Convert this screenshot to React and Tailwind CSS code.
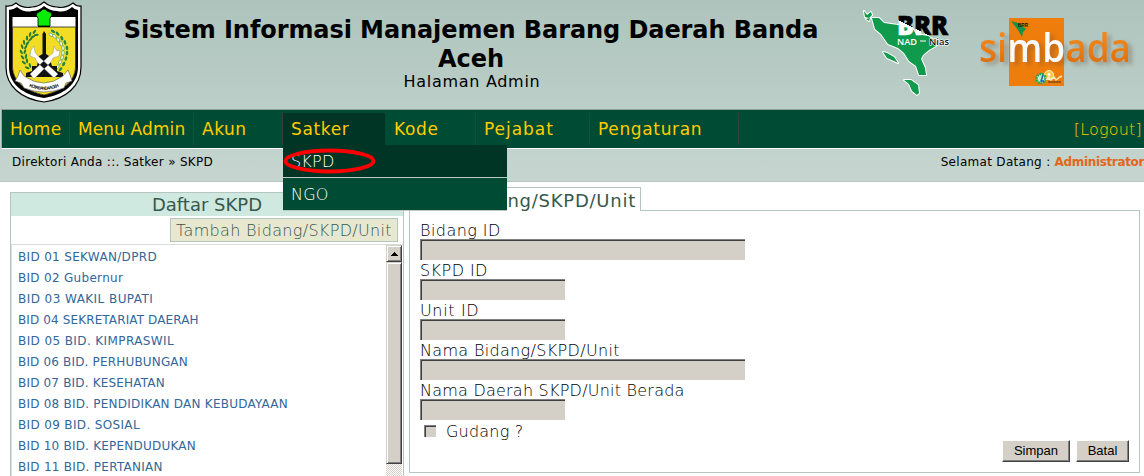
import React from "react";

const directory = [
  ["BID 01 SEKWAN/DPRD", "tracking-[0.33px]"],
  ["BID 02 Gubernur", "tracking-[0.3px]"],
  ["BID 03 WAKIL BUPATI", "tracking-[0.44px]"],
  ["BID 04 SEKRETARIAT DAERAH", "tracking-[0.12px]"],
  ["BID 05 BID. KIMPRASWIL", "tracking-[0.4px]"],
  ["BID 06 BID. PERHUBUNGAN", "tracking-[0.17px]"],
  ["BID 07 BID. KESEHATAN", "tracking-[0.18px]"],
  ["BID 08 BID. PENDIDIKAN DAN KEBUDAYAAN", "tracking-[0.23px]"],
  ["BID 09 BID. SOSIAL", "tracking-[0.35px]"],
  ["BID 10 BID. KEPENDUDUKAN", "tracking-[0.22px]"],
  ["BID 11 BID. PERTANIAN", "tracking-[0.27px]"],
];

const fields = [
  ["Bidang ID", "w-[325px]", "tracking-[0.45px]"],
  ["SKPD ID", "w-[145px]", "tracking-[0.45px]"],
  ["Unit ID", "w-[145px]", "tracking-[0.65px]"],
  ["Nama Bidang/SKPD/Unit", "w-[325px]", "tracking-[0.33px]"],
  ["Nama Daerah SKPD/Unit Berada", "w-[145px]", "tracking-[0.23px]"],
];

const menu = [
  ["Home", "w-[68px]", "tracking-[0.3px]"],
  ["Menu Admin", "w-[124px]", "tracking-[0.1px]"],
  ["Akun", "w-[89px]", "tracking-[0.5px]"],
  ["Satker", "w-[102px]", "tracking-[0.65px]"],
  ["Kode", "w-[91px] pl-px", "tracking-[0.7px]"],
  ["Pejabat", "w-[114px]", "tracking-[0.95px]"],
  ["Pengaturan", "w-[149px]", "tracking-[0.65px]"],
];

const leftLeaves = [
  [36, 33, 150], [32, 35, 130], [29, 38, 115], [26, 42, 105], [24, 46, 95],
  [23, 51, 85], [24, 56, 75], [25, 61, 60], [28, 66, 50],
];
const rightLeaves = [
  [52, 33, 30], [56, 35, 50], [60, 39, 65], [63, 43, 75], [65, 48, 85],
  [65, 53, 95], [64, 58, 105], [62, 63, 120], [59, 68, 130],
];

function Crest() {
  return (
    <svg width="78" height="102" viewBox="5 1 78 102" className="block">
      <path d="M6 6Q11 7 16 3Q23 9 32 7Q38 7 44 2Q50 7 57 7Q65 9 73 3Q77 7 81 6V67C81 86 66 99 44 102C21 99 6 86 6 67Z" fill="#fff" stroke="#000" strokeWidth="1.2" />
      <path d="M9 10Q13 10 17 7Q24 13 32 11Q39 11 44 6Q50 11 57 11Q65 13 72 7Q75 10 78 10V67C78 84 64 95 44 98C23 95 9 84 9 67Z" fill="#000" />
      <path d="M12.500 17H38V27H50V17H75.500V67C75 82 62 91 44 95C26 91 13 82 12.500 67Z" fill="#fff" />
      <path d="M12.500 27H75.500V67C75 82 62 91 44 95C26 91 13 82 12.500 67Z" fill="#f2dc24" stroke="#222" strokeWidth=".8" />
      <path d="M38 26V18L36 15Q37 12 41 11Q44 7 47 11Q52 12 52 15L50 18V26Z" fill="#08ec08" stroke="#000" strokeWidth=".8" />
      {leftLeaves.map(([x, y, r]) => (
        <g key={y} transform={`translate(${x} ${y}) rotate(${r})`}>
          <ellipse cx="0" cy="-2" rx="2.5" ry="1.1" fill="#237c34" transform="rotate(25)" />
          <ellipse cx="0" cy="2" rx="2.5" ry="1.1" fill="#237c34" transform="rotate(-25)" />
        </g>
      ))}
      {rightLeaves.map(([x, y, r]) => (
        <g key={y} transform={`translate(${x} ${y}) rotate(${r})`}>
          <ellipse cx="0" cy="-2" rx="2.4" ry="1.3" fill="#1e8a46" />
          <ellipse cx="0" cy="2" rx="2.4" ry="1.3" fill="#f2fbe9" stroke="#2c8754" strokeWidth=".5" />
        </g>
      ))}
      <path d="M44 31L46 34V54L49 56 52 66H57V71L63 73V77H26V73L32 71V66H37L39 56 42.500 54V34Z" fill="#111" />
      <path d="M34 46L31 50 30 56 35 58 37 62 54 78 58 74 38 56 35 52ZM54 46L57 51 60 50 59 56 53 58 51 62 34 79 30 74 48 57 53 53Z" fill="#fff" stroke="#777" strokeWidth=".4" />
      <path d="M20 70L24 76Q44 90 63 76L68 70 70 75 72 81 66 83 64 88Q44 96 24 88L21 83 15 81 18 76Z" fill="#fff" stroke="#555" strokeWidth=".6" />
      <path id="ribbon" d="M28 86Q44 93.500 60 86" fill="none" />
      <text fill="#111" className="font-['Liberation_Sans'] text-[4.500px] font-bold">
        <textPath href="#ribbon" startOffset="1" textLength="31">KOTA BANDA ACEH</textPath>
      </text>
    </svg>
  );
}

function BrrLogo() {
  return (
    <svg width="94" height="96" viewBox="860 4 94 96" className="block">
      <defs>
        <linearGradient id="split" gradientUnits="userSpaceOnUse" x1="910" y1="20" x2="905" y2="30">
          <stop offset=".5" stopColor="#000" /><stop offset=".5" stopColor="#fff" />
        </linearGradient>
      </defs>
      <g fill="#0f9a4c" stroke="#fff" strokeWidth="2" strokeLinejoin="round" paintOrder="stroke">
        <path d="M864 11L867 15 871 12 872 15 869 18 865 17ZM866 19L870 18 869 21Z" />
        <path d="M872 18L879 18 884 23 898 25 911 26 916 34 928 36 937 42 936 46 929 50 923 55 921 59 925 68 926 75 919 75 916 66 909 61 904 53 898 48 888 44 881 34 875 29Z" />
        <path d="M883 52L887 53 894 57 898 63 894 61 887 58Z" />
        <path d="M904 80L911 80 918 85 919 93 917 95 912 91 909 84Z" />
      </g>
      <text x="897" y="35" textLength="51" lengthAdjust="spacingAndGlyphs" fill="url(#split)" stroke="url(#split)" strokeWidth=".6" className="font-['Open_Sans'] text-[27px] font-extrabold">BRR</text>
      <text x="897" y="44.500" textLength="20" lengthAdjust="spacingAndGlyphs" fill="#fff" className="font-['Open_Sans'] text-[9.500px] font-semibold">NAD</text>
      <path d="M920 41H926" stroke="#fff" />
      <text x="929" y="44.500" textLength="20" lengthAdjust="spacingAndGlyphs" fill="#111" stroke="#fff" strokeWidth="1.200" paintOrder="stroke" className="font-['Open_Sans'] text-[9.500px] font-semibold">Nias</text>
    </svg>
  );
}

function SimbadaLogo() {
  return (
    <svg width="168" height="76" viewBox="976 14 168 76" className="block">
      <defs>
        <linearGradient id="orange" x1="0" y1="0" x2="0" y2="1">
          <stop offset="0" stopColor="#f5922c" /><stop offset=".6" stopColor="#ea7b10" /><stop offset="1" stopColor="#d56505" />
        </linearGradient>
      </defs>
      <rect x="1009" y="18" width="55" height="68" fill="#ee7d0c" />
      <path d="M1011 21L1018 23 1023 27 1026 29 1023 32 1022 37 1018 30Z" fill="#16934a" />
      <text x="1018" y="26.500" textLength="10" lengthAdjust="spacingAndGlyphs" fill="#111" className="font-['Liberation_Sans'] text-[5px] font-bold">BRR</text>
      <text x="979" y="61.500" textLength="152" lengthAdjust="spacingAndGlyphs" fill="url(#orange)" className="font-['Open_Sans'] text-[39px] font-semibold drop-shadow-[4px_3px_2px_#6b4a3560]">si<tspan fill="#fafafa">mb</tspan>ada</text>
      <circle cx="1049" cy="75" r="4.500" fill="#f6c73b" stroke="#fff6cf" strokeWidth="1" />
      <circle cx="1049" cy="74.500" r="1.500" fill="#fff" />
      <circle cx="1041" cy="78.500" r="4.500" fill="#c8efcb" stroke="#25a555" strokeWidth="2.500" strokeDasharray="2 .7" />
      <path d="M1043 75L1041 81H1044" stroke="#1460bb" strokeWidth="1.500" fill="none" />
      <path d="M1046 80L1049 77 1051 80 1054 77 1056 80 1060 77 1062 76" stroke="#f7e8b6" strokeWidth="1.500" fill="none" />
      <path d="M1048 82H1061" stroke="#503018" strokeWidth="1" />
    </svg>
  );
}

function Header() {
  return (
    <header className="flex h-[109px] items-start">
      <div className="w-[88px] pl-[5px] pt-px"><Crest /></div>
      <div className="flex w-[766px] flex-col items-center whitespace-nowrap pt-4 text-black">
        <h1 className="text-center text-[24px] font-bold leading-[29px] tracking-[-0.08px]">
          Sistem Informasi Manajemen Barang Daerah Banda<br />Aceh
        </h1>
        <p className="-mt-px pl-[2px] text-[16px] leading-[17px] tracking-[0.7px]">Halaman Admin</p>
      </div>
      <div className="ml-[6px] pt-1"><BrrLogo /></div>
      <div className="ml-[22px] pt-[14px]"><SimbadaLogo /></div>
    </header>
  );
}

function SatkerMenu() {
  return (
    <ul className="absolute left-0 top-[32px] z-10 w-[224px] text-[16px] font-extralight leading-[34px] tracking-[0.2px] text-white">
      <li className="relative h-[33px] border-b border-[#b8c9c3] bg-[#003526] pl-2">
        SKPD
        <svg className="absolute left-0 top-[3px]" width="94" height="26" viewBox="0 0 94 26">
          <ellipse cx="46.500" cy="13" rx="44" ry="10.500" fill="none" stroke="#fb0000" strokeWidth="4" />
        </svg>
      </li>
      <li className="h-[33px] border-b border-[#b8c9c3] bg-[#004b33] pl-2">NGO</li>
    </ul>
  );
}

function NavBar() {
  return (
    <nav className="ml-px flex h-[40px] border-b border-l border-t border-b-white border-l-[#9daaa5] border-t-[#8f9d97] bg-[#004b33] pt-[3px] text-[17px] text-[#ffcc00]">
      {menu.map(([name, width, tracking]) => (
        <div key={name} className={`relative h-[32px] shrink-0 ${width}`}>
          <div className={`h-full pl-2 leading-[33px] ${tracking} ${name === "Satker" ? "bg-[#003526]" : "border-r border-[#33403a]"}`}>{name}</div>
          {name === "Satker" && <SatkerMenu />}
        </div>
      ))}
      <a className="ml-auto pr-[2px] text-[16px] font-extralight leading-[33px] tracking-[0.2px]">[Logout]</a>
    </nav>
  );
}

function Scrollbar() {
  return (
    <div className="mr-px flex w-[16px] flex-col bg-[repeating-conic-gradient(#d4d0c8_0_25%,#fff_0_50%)] bg-[length:2px_2px]">
      <div className="flex h-[17px] items-center justify-center border border-b-[#404040] border-l-[#d4d0c8] border-r-[#404040] border-t-[#d4d0c8] bg-[#d4d0c8] shadow-[inset_1px_1px_#fff,inset_-1px_-1px_#808080]">
        <svg width="7" height="4" viewBox="0 0 7 4" shapeRendering="crispEdges"><path d="M3 0H4V1H5V2H6V3H7V4H0V3H1V2H2V1H3Z" /></svg>
      </div>
      <div className="h-[202px] border border-b-[#404040] border-l-[#d4d0c8] border-r-[#404040] border-t-[#d4d0c8] bg-[#d4d0c8] shadow-[inset_1px_1px_#fff,inset_-1px_-1px_#808080]" />
    </div>
  );
}

function DirectoryPanel() {
  return (
    <section className="mt-[10px] flex h-[290px] w-[394px] flex-col border border-[#b5c5c0]">
      <h2 className="h-[23px] bg-[#cfe9e0] text-center text-[18px] leading-[24px] text-[#37584d]">Daftar SKPD</h2>
      <div className="flex h-[28px] justify-end pr-[5px] pt-[2px]">
        <button className="h-[24px] w-[228px] whitespace-nowrap border border-[#b5c5c0] bg-[#e8e7d0] text-[16px] font-extralight leading-[23px] tracking-[0.33px] text-[#37584d]">Tambah Bidang/SKPD/Unit</button>
      </div>
      <div className="flex flex-1 border-l border-t border-[#d9dedc]">
        <ul className="flex-1 pl-[6px] pt-[2px] text-[12px] leading-[21px] text-[#336699]">
          {directory.map(([name, tracking]) => (
            <li key={name} className={`whitespace-nowrap ${tracking}`}>{name}</li>
          ))}
        </ul>
        <Scrollbar />
      </div>
    </section>
  );
}

function FormPanel() {
  return (
    <section className="ml-[5px] w-[731px] pt-[5px]">
      <div className="flex h-[24px]">
        <h2 className="flex w-[232px] justify-end whitespace-nowrap border border-b-0 border-[#b5c5c0] pr-[4px] text-[18px] leading-[26px] tracking-[0.75px] text-[#37584d]">
          <span>Bidang/SKPD/Unit</span>
        </h2>
        <div className="flex-1 border-b border-[#b5c5c0]" />
      </div>
      <form className="flex h-[262px] flex-col border border-t-0 border-[#b5c5c0] pl-[10px] pt-[9px] text-[16px] font-extralight text-black">
        {fields.map(([label, width, tracking]) => (
          <label key={label} className={`block whitespace-nowrap ${tracking}`}>
            <span className="block h-[19px] leading-[21px]">{label}</span>
            <input disabled className={`block h-[21px] border-l border-t border-[#808080] bg-[#d4d0c8] shadow-[inset_1px_1px_#404040] ${width}`} />
          </label>
        ))}
        <label className="mt-[2px] flex h-[20px] items-center pl-[4px] leading-[20px]">
          <span className="mb-[2px] h-[12px] w-[12px] border-l border-t border-[#808080] bg-[#d4d0c8] shadow-[inset_1px_1px_#404040]" />
          <span className="ml-[10px] tracking-[0.2px]">Gudang ?</span>
        </label>
        <div className="-mt-[2px] mr-[10px] flex justify-end gap-[6px] font-['Liberation_Sans'] text-[13px] font-normal leading-[20px]">
          <button type="button" className="h-[22px] w-[68px] border border-b-[#404040] border-l-white border-r-[#404040] border-t-white bg-[#d4d0c8] shadow-[inset_-1px_-1px_#808080]">Simpan</button>
          <button type="button" className="h-[22px] w-[53px] border border-b-[#404040] border-l-white border-r-[#404040] border-t-white bg-[#d4d0c8] shadow-[inset_-1px_-1px_#808080]">Batal</button>
        </div>
      </form>
    </section>
  );
}

export default function App() {
  return (
    <div className="h-[476px] w-[1144px] overflow-hidden bg-white font-['DejaVu_Sans',sans-serif]">
      <div className="h-[182px] border-b border-[#b4c5c0] bg-linear-to-b from-[#adc4bc] to-[#c6d5d0]">
        <Header />
        <NavBar />
        <div className="flex h-[32px] items-center justify-between whitespace-nowrap pb-[7px] pl-[12px] pt-px text-[12px] tracking-[0.3px] text-black">
          <p>Direktori Anda ::. Satker » SKPD</p>
          <p>Selamat Datang : <b className="tracking-[-0.35px] text-[#e2671e]">Administrator</b></p>
        </div>
      </div>
      <main className="flex pl-[10px]">
        <DirectoryPanel />
        <FormPanel />
      </main>
    </div>
  );
}
